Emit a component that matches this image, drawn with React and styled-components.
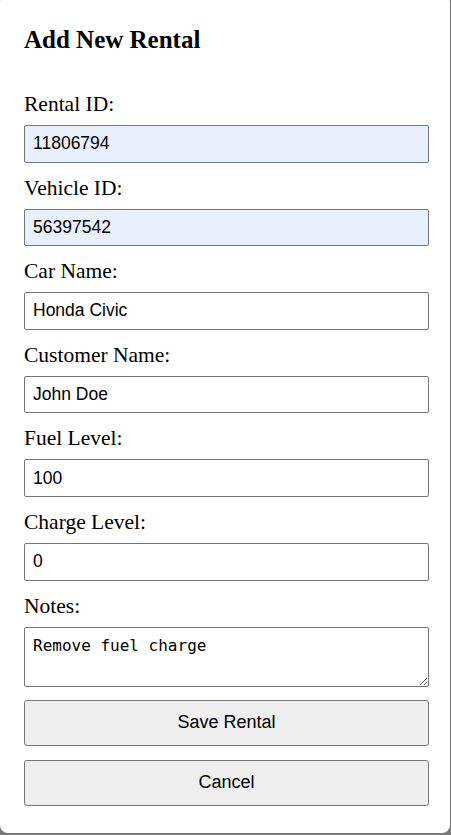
import React from "react";
import styled, { createGlobalStyle } from "styled-components";

const Global = createGlobalStyle`
  html, body { margin: 0; padding: 0; }
  html { background: #7a7a7a; }
  body { width: 451px; height: 835px; overflow: hidden; }
`;

const Card = styled.div`
  box-sizing: border-box;
  width: 450px;
  margin-top: -6px;
  background: #fff;
  border-radius: 8px;
  padding: 31px 21px 27px 24px;
  display: flex;
  flex-direction: column;
`;

const Title = styled.h2`
  margin: 0 0 39px;
  font-family: "Liberation Serif", "Times New Roman", serif;
  font-weight: bold;
  font-size: 25px;
  line-height: 29px;
  color: #000;
`;

const Form = styled.form`
  display: flex;
  flex-direction: column;
`;

const Field = styled.div`
  display: flex;
  flex-direction: column;
  margin-bottom: 14px;
`;

const Label = styled.label`
  font-family: "Liberation Serif", "Times New Roman", serif;
  font-size: 21.5px;
  line-height: 23px;
  color: #000;
  margin-bottom: 9px;
`;

const Input = styled.input`
  box-sizing: border-box;
  width: 405px;
  height: 37.6px;
  margin: 0;
  padding: 0 8px;
  border: 1px solid #767676;
  border-radius: 2px;
  background: ${(p) => (p.$filled ? "#e8f0fe" : "#fff")};
  font-family: "Liberation Sans", Arial, sans-serif;
  font-size: 17.5px;
  color: #000;
  outline: none;
`;

const TextArea = styled.textarea`
  box-sizing: border-box;
  width: 405px;
  height: 60px;
  margin: 0;
  padding: 8px;
  border: 1px solid #767676;
  border-radius: 2px;
  font-family: "DejaVu Sans Mono", "Liberation Mono", monospace;
  font-size: 16px;
  line-height: 20px;
  color: #000;
  outline: none;
  display: block;
`;

const Button = styled.button`
  box-sizing: border-box;
  width: 405px;
  height: 46px;
  margin: ${(p) => (p.$first ? "-1px 0 0" : "14px 0 0")};
  border: 1px solid #767676;
  border-radius: 3px;
  background: #efefef;
  font-family: "Liberation Sans", Arial, sans-serif;
  font-size: 18px;
  color: #000;
  cursor: pointer;
`;

const fields = [
  { id: "rentalId", label: "Rental ID:", value: "11806794", filled: true },
  { id: "vehicleId", label: "Vehicle ID:", value: "56397542", filled: true },
  { id: "carName", label: "Car Name:", value: "Honda Civic" },
  { id: "customerName", label: "Customer Name:", value: "John Doe" },
  { id: "fuelLevel", label: "Fuel Level:", value: "100" },
  { id: "chargeLevel", label: "Charge Level:", value: "0" },
];

export default function App() {
  return (
    <>
      <Global />
      <Card>
        <Title>Add New Rental</Title>
        <Form onSubmit={(e) => e.preventDefault()}>
          {fields.map((f) => (
            <Field key={f.id}>
              <Label htmlFor={f.id}>{f.label}</Label>
              <Input id={f.id} defaultValue={f.value} $filled={f.filled} />
            </Field>
          ))}
          <Field>
            <Label htmlFor="notes">Notes:</Label>
            <TextArea id="notes" defaultValue="Remove fuel charge" />
          </Field>
          <Button type="submit" $first>Save Rental</Button>
          <Button type="button">Cancel</Button>
        </Form>
      </Card>
    </>
  );
}
